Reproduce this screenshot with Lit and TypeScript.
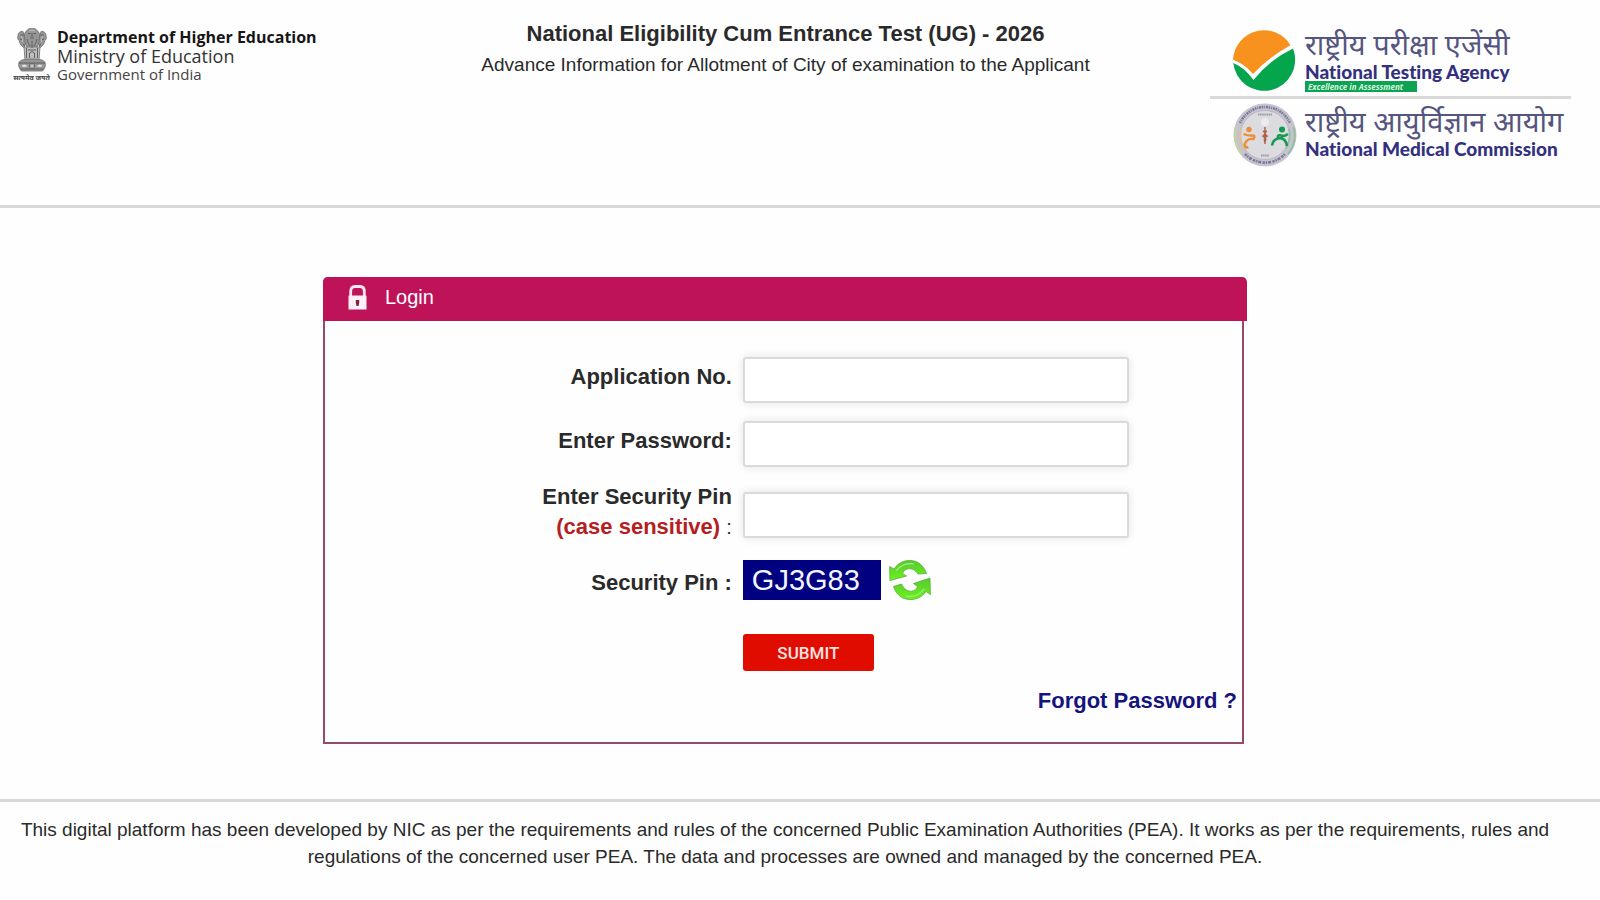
import { LitElement, html, css, svg } from "lit";
import { customElement } from "lit/decorators.js";

const emblem = svg`
  <svg class="emblem" viewBox="0 0 30 45" aria-label="State Emblem of India" role="img">
    <g fill="#969696" stroke="#6c6c6c" stroke-width="0.8">
      <path d="M6 3.500C3 3 .8 5 1 8c-.8 2 0 4 1.500 5 .3 3 1.800 5 4.500 6.500L9 14z" />
      <path d="M24 3.500c3-.5 5.200 1.500 5 4.500.8 2 0 4-1.500 5-.3 3-1.800 5-4.500 6.500L21 14z" />
      <path d="M10 2.500C11 .5 13 .4 15 .4s4 .1 5 2.100c2 1 3 4 2.600 7L21.500 16 19 21h-8l-2.500-5-1.100-6.500C7 6.500 8 3.500 10 2.500z" />
      <path d="M7 19h16l-1 13H8z" fill="#bcbcbc" />
      <path d="M2 34.500C3 32 7 31 15 31s12 1 13 3.500c1 3-.5 6.500-2.500 8.500h-21C2.500 41 1 37.500 2 34.500z" />
    </g>
    <g fill="none" stroke="#5a5a5a" stroke-width="0.9">
      <path d="M11 5.500h2.500M16.500 5.500H19M13 9.500q2 1.500 4 0M15 5v4M10 11q1 5 3 7M20 11q-1 5-3 7M15 13v7" />
      <path d="M3.500 7h3M23.500 7h3M3 11l3 1M27 11l-3 1M6 16l2 2M24 16l-2 2" />
      <path d="M9.500 20v10M20.500 20v10M12.500 30v-5q2.500-3 5 0v5M11 22h8" />
      <path d="M1.800 35h26.400M3.500 41h23" />
      <circle cx="15" cy="38" r="2.600" />
    </g>
    <path d="M4.500 38q2-3 6 0-3 2-6 0zM19.500 38q4-3 6 0-3 2-6 0z" fill="#e0e0e0" />
    <path d="M12.500 38h5M15 35.500v5M13.300 36.300l3.400 3.400M16.700 36.300l-3.400 3.400" stroke="#dcdcdc" stroke-width="0.5" />
    <path d="M4 8q2 2 1.500 6M26 8q-2 2-1.500 6M12 3q3-1.500 6 0" fill="none" stroke="#c9c9c9" stroke-width="0.8" />
  </svg>`;

const ntaMark = svg`
  <svg width="62" height="62" viewBox="0 0 62 62" aria-hidden="true">
    <path d="M0.300 33Q12 38 20.500 50 36 30 60 18.500A31 31 0 1 1 0.300 33z" fill="#04a54c" />
    <path d="M0 29.800A31 31 0 0 1 57.500 15.200Q36 27 20 44 12 34 0 29.800z" fill="#f7921e" />
  </svg>`;

const nmcMark = svg`
  <svg width="64" height="64" viewBox="0 0 64 64" aria-hidden="true">
    <circle cx="32" cy="32" r="31.500" fill="#c5c3cf" />
    <circle cx="32" cy="32" r="24.500" fill="#dcdce0" stroke="#b3b1bd" stroke-width="0.800" />
    <path d="M3.500 24A30 30 0 0 0 9 51" fill="none" stroke="#c6d3a0" stroke-width="2" />
    <path d="M8 26A25 25 0 0 0 11 45" fill="none" stroke="#e9bd8b" stroke-width="1.500" />
    <path d="M60.500 24A30 30 0 0 1 55 51M56 26A25 25 0 0 1 53 45" fill="none" stroke="#8fbf9c" stroke-width="1.700" />
    <path d="M7 20A27.500 27.500 0 0 1 57 20" fill="none" stroke="#7d7a98" stroke-width="2.600" stroke-dasharray="1.600 .9 1 .8 2 .7" />
    <path d="M12 51A27.500 27.500 0 0 0 52 51" fill="none" stroke="#7d7a98" stroke-width="2.600" stroke-dasharray="2.400 .8 1.500 .9 3 1.300" />
    <path d="M25 11.500h14M28 52.500h8" stroke="#9a98a6" stroke-width="2" stroke-dasharray="1.500 .6" />
    <circle cx="32" cy="19" r="4" fill="#ececef" />
    <circle cx="16" cy="26.500" r="2.700" fill="#ee8d35" />
    <path d="M10.500 31q5 2 8.500 1.500 4-.5 1.500 3.500-7-1-9 6 1 3 4 2.500" fill="none" stroke="#ee8d35" stroke-width="2.400" />
    <circle cx="49" cy="26.500" r="3" fill="#159a52" />
    <path d="M55 31q-4 3-7 1.500-4-1-3 3-5 1-6 7M46 35q7 0 8 8" fill="none" stroke="#159a52" stroke-width="2.600" />
    <path d="M32 24v17M30 28q4 2 0 5 4 2 2 6M34 28q-4 2 0 5-4 2-2 6" fill="none" stroke="#b0604a" stroke-width="1.500" />
  </svg>`;

@customElement("login-panel")
export class LoginPanel extends LitElement {
  static styles = css`
    :host { display: block; }
    .panel { border: 2px solid #96496a; border-top: 0; border-radius: 5px 5px 0 0; margin-right: 3px; padding-bottom: 27px; }
    .bar { background: #be1259; color: #fff; height: 44px; margin: 0 -5px 0 -2px; border-radius: 5px 5px 0 0; display: flex; align-items: center; padding: 0 0 4px 25px; gap: 18px; box-sizing: border-box; }
    .bar h2 { font-size: 20px; font-weight: 400; margin: 0; }
    .lock { width: 19px; height: 25px; }
    .fields { display: grid; row-gap: 12px; padding-top: 33px; }
    .row { display: grid; grid-template-columns: 410fr 503fr; column-gap: 11px; align-items: center; min-height: 52px; }
    .row.short { min-height: 40px; }
    .row > * { min-width: 0; }
    .label { text-align: right; font-size: 22px; font-weight: 700; line-height: 30px; padding-bottom: 6px; }
    .short .label { padding: 6px 0 0; }
    .hint { color: #b5201f; }
    .colon { font-weight: 400; font-size: 20px; }
    .box { box-sizing: border-box; width: 386px; max-width: 100%; height: 46px; border: 2px solid #dadada; border-radius: 3px; background: #fff; box-shadow: 0 0 10px #e4e4e4; font: 20px "Liberation Sans", Arial, sans-serif; padding: 0 10px; display: block; outline: none; }
    .captcha { display: flex; align-items: center; gap: 8px; }
    .code { background: #000080; color: #f4f4ff; width: 138px; height: 40px; box-sizing: border-box; padding-left: 9px; font-size: 29px; line-height: 40px; }
    .refresh { background: none; border: 0; padding: 0; width: 42px; height: 40px; cursor: pointer; }
    .submit { background: #e10c00; color: #fbe3e0; border: 0; border-radius: 3px; width: 131px; height: 37px; font: 500 17px Roboto, "Liberation Sans", sans-serif; cursor: pointer; display: block; }
    .actions { padding-top: 22px; }
    .row.send { min-height: 37px; }
    .forgot { text-align: right; font-size: 22px; font-weight: 700; line-height: 28px; margin: 16px 5px 0 0; }
    .forgot a { color: #14147c; text-decoration: none; }
  `;
  render() {
    return html`
      <form class="panel" @submit=${(e: Event) => e.preventDefault()}>
        <div class="bar">
          <svg class="lock" viewBox="0 0 19 25" aria-hidden="true">
            <path d="M2.700 11V6.500Q2.700 1.500 7 1.500H12Q16.300 1.500 16.300 6.500V11" fill="none" stroke="#ffe6f1" stroke-width="2.800" />
            <rect x="0.500" y="10.500" width="18" height="14" rx="0.500" fill="#fff0f6" />
            <path d="M7.800 15h3.400v2.500L10.600 21H8.600L7.800 17.500z" fill="#7a2348" />
          </svg>
          <h2>Login</h2>
        </div>
        <div class="fields">
          <div class="row">
            <label class="label" for="app-no">Application No.</label>
            <input class="box" id="app-no" type="text" />
          </div>
          <div class="row">
            <label class="label" for="password">Enter Password:</label>
            <input class="box" id="password" type="password" />
          </div>
          <div class="row">
            <label class="label" for="pin">Enter Security Pin<br /><span class="hint">(case sensitive)</span> <span class="colon">:</span></label>
            <input class="box" id="pin" type="text" />
          </div>
          <div class="row short">
            <div class="label">Security Pin :</div>
            <div class="captcha">
              <span class="code">GJ3G83</span>
              <button class="refresh" type="button" aria-label="Refresh security pin">
                <svg width="42" height="40" viewBox="0 0 42 40">
                  <defs>
                    <linearGradient id="leaf" x1="0" y1="0" x2="0" y2="1">
                      <stop offset="0" stop-color="#57c932" />
                      <stop offset="1" stop-color="#6df21c" />
                    </linearGradient>
                  </defs>
                  <g fill="url(#leaf)" stroke="#55b03a" stroke-width="0.800">
                    <path d="M.6 6.500L5 9C10 1.500 18-1 26 1.200 31.500 3 35.500 7.500 37.500 13.500L29 14C26.500 10 23 8.500 19.500 8.800 16.500 9.200 14.500 11 13.500 13.500L17.500 16 1 20.500z" />
                    <path d="M41.400 34.500L37 31.500C32 38.500 24 41 16 38.800 10.500 37 6.500 32.500 4.500 26.500L12.500 24C15 29.500 19 31.500 22.500 31.200 25.500 30.800 27.500 29 28.500 26.500L24.500 23.500 41 18z" />
                  </g>
                  <path d="M7 11q7-9 18-7M35 29q-7 9-18 7" fill="none" stroke="#a5ef86" stroke-width="1.200" />
                </svg>
              </button>
            </div>
          </div>
          <div class="actions">
            <div class="row send">
              <span></span>
              <button class="submit" type="submit">SUBMIT</button>
            </div>
          </div>
        </div>
        <div class="forgot"><a href="#">Forgot Password ?</a></div>
      </form>
    `;
  }
}

@customElement("app-root")
export class AppRoot extends LitElement {
  static styles = css`
    :host { display: block; min-height: 100vh; background: #fefefe; color: #2a2a2a; font-family: "Liberation Sans", Arial, sans-serif; }
    .head { display: grid; grid-template-columns: 1fr auto 1fr; align-items: start; padding: 20px 29px 38px 0; border-bottom: 3px solid #d8d8d8; }
    .dept { display: flex; gap: 8px; padding: 8px 0 0 14px; color: #333; }
    .crest { display: flex; flex-direction: column; align-items: center; width: 35px; }
    .emblem { width: 30px; height: 45px; }
    .motto { font: 700 7px "Noto Sans Devanagari", "Noto Sans", sans-serif; line-height: 12px; white-space: nowrap; color: #444; }
    .names { font-family: "Open Sans", sans-serif; line-height: 19px; white-space: nowrap; }
    .d1 { font-size: 16px; font-weight: 700; color: #161616; }
    .d2 { font-size: 18px; }
    .d3 { font-size: 15px; line-height: 16px; color: #444; }
    .title { text-align: center; }
    .title h1 { font-size: 22px; line-height: 28px; margin: 0; }
    .title p { font-size: 19px; line-height: 34px; margin: 0; }
    .orgs { justify-self: end; width: 361px; color: #33307e; font-family: Lato, sans-serif; font-variant-ligatures: none; }
    .org { display: grid; grid-template-columns: 64px auto; justify-content: start; column-gap: 8px; padding: 10px 0 4px 23px; }
    .org + .org { border-top: 3px solid #d9d9d9; padding: 4px 0 0 23px; }
    .org + .org .words { padding-top: 7px; }
    .words { height: 62px; box-sizing: border-box; padding-top: 3px; }
    .hi { font-family: "Noto Sans Devanagari", "Noto Sans", sans-serif; font-size: 29px; line-height: 30px; color: #55557f; white-space: nowrap; }
    .en { font-size: 19px; font-weight: 900; line-height: 18px; white-space: nowrap; }
    .tag { display: block; width: 112px; box-sizing: border-box; padding-left: 3px; background: #0da350; color: #d8f5e2; font: italic 700 8px "Open Sans", sans-serif; line-height: 11px; white-space: nowrap; }
    main { padding: 69px 353px 55px 323px; }
    footer { border-top: 3px solid #d8d8d8; padding: 14px 30px 20px 0; text-align: center; font-size: 19px; line-height: 27px; }
    footer p { margin: 0; }
  `;
  render() {
    return html`
      <header class="head">
        <div class="dept">
          <div class="crest">${emblem}<span class="motto">सत्यमेव जयते</span></div>
          <div class="names">
            <div class="d1">Department of Higher Education</div>
            <div class="d2">Ministry of Education</div>
            <div class="d3">Government of India</div>
          </div>
        </div>
        <div class="title">
          <h1>National Eligibility Cum Entrance Test (UG) - 2026</h1>
          <p>Advance Information for Allotment of City of examination to the Applicant</p>
        </div>
        <div class="orgs">
          <div class="org">
            ${ntaMark}
            <div class="words">
              <div class="hi" lang="hi">राष्ट्रीय परीक्षा एजेंसी</div>
              <div class="en">National Testing Agency</div>
              <span class="tag">Excellence in Assessment</span>
            </div>
          </div>
          <div class="org">
            ${nmcMark}
            <div class="words">
              <div class="hi" lang="hi">राष्ट्रीय आयुर्विज्ञान आयोग</div>
              <div class="en">National Medical Commission</div>
            </div>
          </div>
        </div>
      </header>
      <main><login-panel></login-panel></main>
      <footer>
        <p>This digital platform has been developed by NIC as per the requirements and rules of the concerned Public Examination Authorities (PEA). It works as per the requirements, rules and regulations of the concerned user PEA. The data and processes are owned and managed by the concerned PEA.</p>
      </footer>
    `;
  }
}
